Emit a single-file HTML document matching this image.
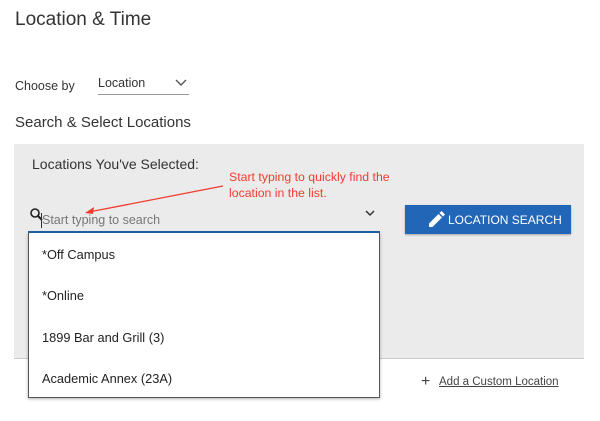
<!DOCTYPE html>
<html><head><style>
body{margin:0;width:600px;height:421px;background:#fff;font-family:"Liberation Sans",sans-serif;color:#222;position:relative;overflow:hidden}
.a{position:absolute;white-space:nowrap}
</style></head><body>
<div class="a" style="left:15px;top:9px;font-size:19px;color:#333">Location &amp; Time</div>
<div class="a" style="left:15px;top:79px;font-size:12.5px;color:#333">Choose by</div>
<div class="a" style="left:98px;top:76px;font-size:12.5px;color:#333">Location</div>
<svg class="a" style="left:174px;top:78px" width="14" height="10"><path d="M2 2l5 5 5-5" stroke="#555" stroke-width="1.4" fill="none"/></svg>
<div class="a" style="left:98px;top:94px;width:91px;height:1px;background:#999"></div>
<div class="a" style="left:15px;top:114px;font-size:15px;color:#333">Search &amp; Select Locations</div>
<div class="a" style="left:14px;top:144px;width:570px;height:214px;background:#ebebeb;border-bottom:1px solid #ccc"></div>
<div class="a" style="left:32px;top:156px;font-size:14px;color:#333">Locations You've Selected:</div>
<div class="a" style="left:229px;top:169px;font-size:12.3px;line-height:16px;color:#f03c2e">Start typing to quickly find the<br>location in the list.</div>
<div class="a" style="left:405px;top:205px;width:166px;height:29px;background:#2266b8;box-shadow:0 1px 2px rgba(0,0,0,.3)"></div>
<div class="a" style="left:448px;top:213px;font-size:12px;color:#fff">LOCATION SEARCH</div>
<svg class="a" style="left:0;top:0" width="600" height="421"><path d="M223 186L89 212" stroke="#f03c2e" stroke-width="1.3"/><path d="M85 213l9-6-1 7z" fill="#f03c2e"/>
<circle cx="35" cy="213" r="4" stroke="#222" stroke-width="1.6" fill="none"/><path d="M38 216l4 4" stroke="#222" stroke-width="2"/>
<path d="M366 211l4 4 4-4" stroke="#333" stroke-width="1.5" fill="none"/>
<path d="M429 227l0-3.5 9.5-9.5 3.5 3.5-9.5 9.5z" fill="#fff"/><path d="M439.5 213l2-2 3.5 3.5-2 2z" fill="#fff"/></svg>
<div class="a" style="left:42px;top:213px;font-size:12.5px;color:#777">Start typing to search</div>
<div class="a" style="left:41px;top:213px;width:1px;height:15px;background:#333"></div>
<div class="a" style="left:28px;top:231px;width:352px;height:2px;background:#1f5fa8"></div>
<div class="a" style="left:28px;top:233px;width:350px;height:164px;background:#fff;border:1px solid #555;border-top:none;box-shadow:0 1px 3px rgba(0,0,0,.3)"></div>
<div class="a" style="left:42px;top:247px;font-size:12.8px;color:#222">*Off Campus</div>
<div class="a" style="left:42px;top:288px;font-size:12.8px;color:#222">*Online</div>
<div class="a" style="left:42px;top:330px;font-size:12.8px;color:#222">1899 Bar and Grill (3)</div>
<div class="a" style="left:42px;top:371px;font-size:12.8px;color:#222">Academic Annex (23A)</div>
<div class="a" style="left:421px;top:373px;font-size:16px;color:#444">+</div>
<div class="a" style="left:439px;top:376px;font-size:11.5px;color:#444;text-decoration:underline">Add a Custom Location</div>
</body></html>
